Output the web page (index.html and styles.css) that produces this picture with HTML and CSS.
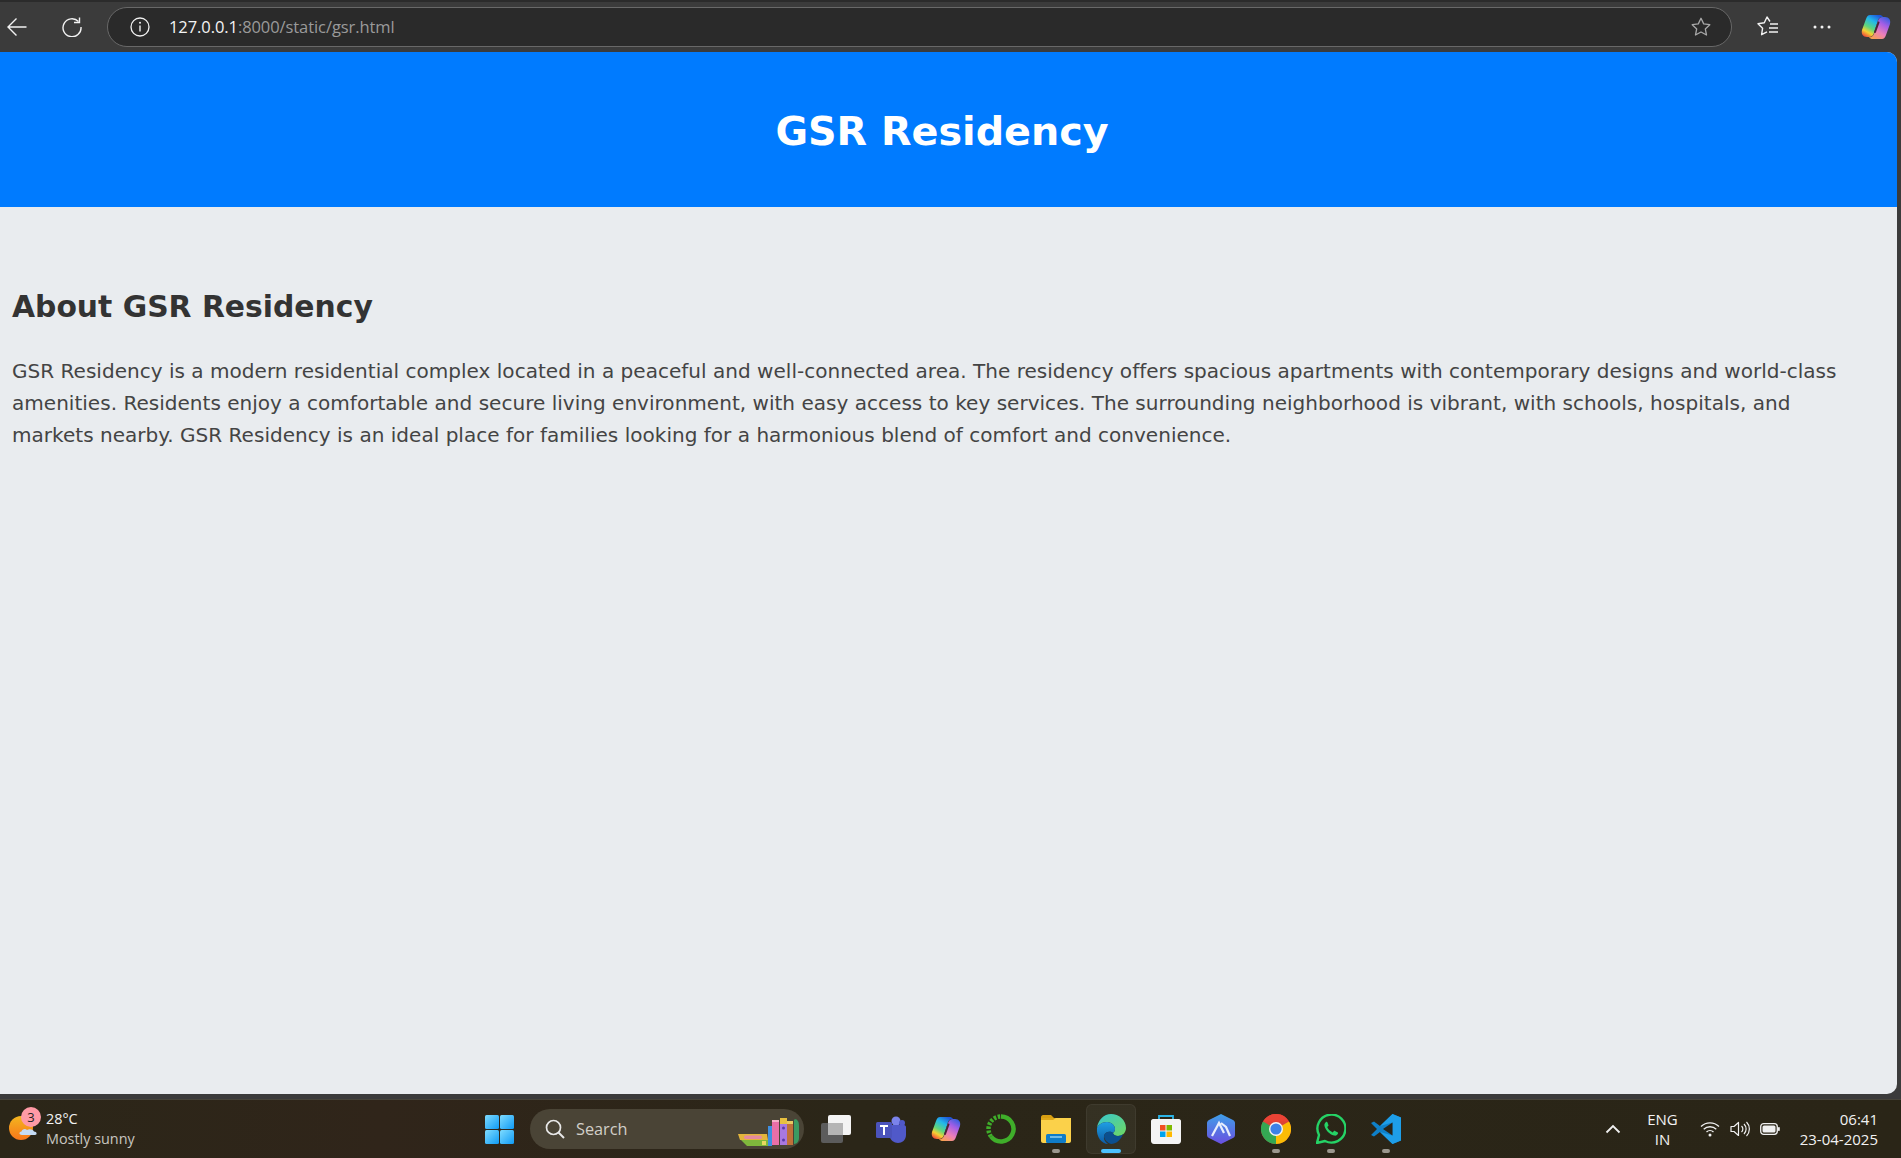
FILE: index.html
```html
<!DOCTYPE html>
<html lang="en">
<head>
<meta charset="utf-8">
<title>GSR Residency</title>
<link rel="stylesheet" href="styles.css">
</head>
<body>
<svg class="defs" width="0" height="0" aria-hidden="true">
  <defs>
    <linearGradient id="cpA" x1=".75" y1="0" x2=".2" y2="1"><stop offset="0" stop-color="#1f55dc"/><stop offset=".3" stop-color="#22b8ea"/><stop offset=".6" stop-color="#5fd67c"/><stop offset=".8" stop-color="#f5d233"/><stop offset="1" stop-color="#f0503a"/></linearGradient>
    <linearGradient id="cpB" x1=".8" y1="0" x2=".2" y2="1"><stop offset="0" stop-color="#3a60e0"/><stop offset=".3" stop-color="#a45ee6"/><stop offset=".65" stop-color="#ec7fb8"/><stop offset="1" stop-color="#f9a24e"/></linearGradient>
    <linearGradient id="edA" x1="0" y1="0" x2="1" y2="1"><stop offset="0" stop-color="#37c6d0"/><stop offset="1" stop-color="#6fd860"/></linearGradient>
    <linearGradient id="edB" x1="0" y1="0" x2="0" y2="1"><stop offset="0" stop-color="#1fa0e4"/><stop offset="1" stop-color="#0c59a4"/></linearGradient>
    <linearGradient id="sun" x1="0" y1="0" x2="0" y2="1"><stop offset="0" stop-color="#f3b61f"/><stop offset="1" stop-color="#f8761a"/></linearGradient>
    <linearGradient id="win" x1="0" y1="0" x2="1" y2="1"><stop offset="0" stop-color="#7fdcff"/><stop offset="1" stop-color="#0f9af5"/></linearGradient>
    <linearGradient id="hex" x1="0" y1="0" x2="0" y2="1"><stop offset="0" stop-color="#3f9fe8"/><stop offset="1" stop-color="#6a4fe0"/></linearGradient>
    <symbol id="copilot" viewBox="0 0 30 26">
      <path d="M9 1h9c2 0 3 .5 4 2-2-.5-4 .5-5 3l-4 13c-.8 2.500-2.500 4-5 4H6C2 23 0 20 1 16L5 5C6 2.500 7 1 9 1z" fill="url(#cpA)"/>
      <path d="M21 25h-9c-2 0-3-.5-4-2 2 .5 4-.5 5-3l4-13c.8-2.500 2.500-4 5-4h2c4 0 6 3 5 7l-4 11c-1 2.500-2 4-4 4z" fill="url(#cpB)"/>
      <path d="M17.500 8.500 14 18" stroke="#4a2436" stroke-width="2" stroke-linecap="round"/>
    </symbol>
  </defs>
</svg>

<header class="chrome">
  <div class="chrome-top"></div>
  <div class="toolbar">
    <button class="nav nav-back" aria-label="Back">
      <svg viewBox="0 0 20 20" class="i20"><path d="M19.500 10H1M9.500 1.500 1 10l8.500 8.500" fill="none" stroke="#f2f2f2" stroke-width="1.400"/></svg>
    </button>
    <button class="nav nav-reload" aria-label="Reload">
      <svg viewBox="0 0 20 20" class="i20"><path d="M16.500 4.500A9 9 0 1 0 19 10" fill="none" stroke="#f2f2f2" stroke-width="1.400"/><path d="M17.500 .5v5h-5.500" fill="none" stroke="#f2f2f2" stroke-width="1.400"/></svg>
    </button>
    <div class="omnibox">
      <svg viewBox="0 0 20 20" class="i20 info"><circle cx="10" cy="10" r="9" fill="none" stroke="#f0f0f0" stroke-width="1.300"/><path d="M10 8.500v6" stroke="#f0f0f0" stroke-width="1.400"/><circle cx="10" cy="5.800" r="1" fill="#f0f0f0"/></svg>
      <span class="url"><span class="host">127.0.0.1</span><span class="rest">:8000/static/gsr.html</span></span>
      <svg viewBox="0 0 20 20" class="i20 star"><path d="m10 1.300 2.700 5.600 6.100.8-4.500 4.200 1.200 6.100L10 15l-5.500 3 1.200-6.100L1.200 7.700l6.100-.8z" fill="none" stroke="#a8a8a8" stroke-width="1.300" stroke-linejoin="round"/></svg>
    </div>
    <div class="tools">
      <svg viewBox="0 0 22 22" class="i22"><path d="M13 5.500 10 1 7.300 6.700 1 7.700l4.600 4.500-1 6.500 5.400-2.800" fill="none" stroke="#f2f2f2" stroke-width="1.400" stroke-linejoin="round"/><path d="M13 8h8M12 12h9M12 16h9" stroke="#f2f2f2" stroke-width="1.400"/></svg>
      <svg viewBox="0 0 22 22" class="i22 dots"><circle cx="4" cy="11" r="1.500" fill="#f2f2f2"/><circle cx="11" cy="11" r="1.500" fill="#f2f2f2"/><circle cx="18" cy="11" r="1.500" fill="#f2f2f2"/></svg>
      <svg class="i-copilot copilot-top"><use href="#copilot"/></svg>
    </div>
  </div>
</header>

<div class="viewport">
  <header class="site-header">
    <h1>GSR Residency</h1>
  </header>
  <main class="content">
    <h2>About GSR Residency</h2>
    <p>GSR Residency is a modern residential complex located in a peaceful and well-connected area. The residency offers spacious apartments with contemporary designs and world-class amenities. Residents enjoy a comfortable and secure living environment, with easy access to key services. The surrounding neighborhood is vibrant, with schools, hospitals, and markets nearby. GSR Residency is an ideal place for families looking for a harmonious blend of comfort and convenience.</p>
  </main>
</div>

<footer class="taskbar">
  <div class="weather">
    <span class="weather-icon">
      <svg viewBox="0 0 30 30" class="i30">
        <circle cx="12" cy="14" r="12" fill="url(#sun)"/>
        <path d="M13 21c-3 0-3.500-3-.5-3.500.5-2.500 4-3.500 5.500-1.500 2.500-1.500 6-.5 7 1.500 3 0 3.500 3.500 1 3.500z" fill="#c5dcf5"/>
      </svg>
      <span class="badge">3</span>
    </span>
    <span class="weather-text"><span class="temp">28°C</span><span class="cond">Mostly sunny</span></span>
  </div>

  <div class="center">
    <span class="tb start">
      <svg viewBox="0 0 29 29" class="i29"><rect width="14" height="14" rx="1.500" fill="url(#win)"/><rect x="15" width="14" height="14" rx="1.500" fill="url(#win)"/><rect y="15" width="14" height="14" rx="1.500" fill="url(#win)"/><rect x="15" y="15" width="14" height="14" rx="1.500" fill="url(#win)"/></svg>
    </span>
    <div class="search">
      <svg viewBox="0 0 20 20" class="i20"><circle cx="8.500" cy="8.500" r="7" fill="none" stroke="#e8e8e8" stroke-width="1.700"/><path d="m13.500 13.500 5.500 5.500" stroke="#e8e8e8" stroke-width="1.900"/></svg>
      <span class="search-label">Search</span>
      <svg viewBox="0 0 62 28" class="books">
        <path d="M0 16h29l1 6H2z" fill="#e3b53c"/><rect x="6" y="17.500" width="18" height="3.500" rx="1.700" fill="#e58aa0"/>
        <path d="M3 22h27v6H9z" fill="#7fb83c"/><rect x="24" y="23" width="4" height="4" fill="#e8d860"/>
        <rect x="30" y="8" width="4" height="20" fill="#3f8fe0"/>
        <rect x="34" y="2" width="7" height="25" fill="#e86fa8"/><rect x="34" y="2" width="7" height="2" fill="#f4b0c8"/>
        <rect x="42" y="0" width="7" height="27" fill="#a878e0"/><rect x="42" y="0" width="7" height="6" fill="#e8c040"/><circle cx="45.500" cy="10" r="1.500" fill="#5a3aa8"/><circle cx="45.500" cy="22" r="1.500" fill="#5a3aa8"/>
        <rect x="49" y="3" width="6" height="24" fill="#c0703a"/><rect x="49" y="3" width="6" height="3" fill="#e8c860"/>
        <path d="M56 2c0-1 3-1 3 0 1.500 1 2 3 2 6v12c0 3-2 6-5 6z" fill="#3c9a62"/>
      </svg>
    </div>
    <span class="tb">
      <svg viewBox="0 0 30 28" class="i30"><rect y="8" width="22" height="20" rx="2" fill="#5c5c5c"/><rect x="7" width="23" height="20" rx="2" fill="#f4f4f4"/><rect x="7" y="8" width="15" height="12" fill="#b5b5b5"/></svg>
    </span>
    <span class="tb">
      <svg viewBox="0 0 30 28" class="i30"><circle cx="20" cy="6" r="4.500" fill="#7b83eb"/><path d="M13 10h15c1 0 2 1 2 2v8c0 5-4 8-8 8s-8-3-9-8z" fill="#5059c9"/><circle cx="26" cy="8" r="3" fill="#5059c9"/><rect y="7" width="16" height="16" rx="1.500" fill="#4b53bc"/><path d="M4 11h8M8 11v9" stroke="#fff" stroke-width="2" fill="none"/></svg>
    </span>
    <span class="tb"><svg class="i-copilot"><use href="#copilot"/></svg></span>
    <span class="tb">
      <svg viewBox="0 0 30 30" class="i30"><path d="M15 2.500A12.500 12.500 0 1 1 5 22.500" fill="none" stroke="#3fae2a" stroke-width="4.500"/><path d="M5 22.500A12.500 12.500 0 0 1 15 2.500" fill="none" stroke="#3fae2a" stroke-width="4.500" stroke-dasharray="2.500 1.500"/></svg>
    </span>
    <span class="tb">
      <svg viewBox="0 0 30 28" class="i30"><path d="M0 2c0-1 1-2 2-2h8l3 3h-13z" fill="#d89f12"/><path d="M0 3h30v23c0 1-1 2-2 2H2c-1 0-2-1-2-2z" fill="#fbd14a"/><path d="M0 5h12l3-2H0z" fill="#e0a818"/><rect x="5" y="19" width="20" height="9" rx="1.500" fill="#0f7cc8"/><path d="M9 22h12" stroke="#8fd0f5" stroke-width="1.500"/></svg>
      <i class="dot"></i>
    </span>
    <span class="tb tb-active">
      <svg viewBox="0 0 30 30" class="i30"><path d="M1 14C2 6 8 0 15 0c8 0 15 6 15 14 0 5-4 8-8 8-3 0-5-2-5-3 1-1 2-2 2-4 0-4-4-7-8-7-5 0-9 3-10 6z" fill="url(#edA)"/><path d="M1 14c1-3 5-6 10-6 4 0 8 3 8 7 0 2-1 3-2 4-2-2-8-2-9 3-.7 3 1 6 4 8C6 30 0 23 1 14z" fill="url(#edB)"/><path d="M17 19c0 1 2 3 5 3 2 0 4-1 5-2-2 6-7 10-12 10-3-1-7-4-7-8 1-5 7-5 9-3z" fill="#0b4f8f"/></svg>
      <i class="dot dot-active"></i>
    </span>
    <span class="tb">
      <svg viewBox="0 0 30 30" class="i30"><path d="M8 6V2h14v4" fill="none" stroke="#2cb5e8" stroke-width="1.800"/><path d="M2 5h26c1 0 2 1 2 2v20c0 1.500-1 3-3 3H3c-2 0-3-1.500-3-3V7c0-1 1-2 2-2z" fill="#f4f4f4"/><rect x="9" y="11" width="5.500" height="5.500" fill="#f25022"/><rect x="15.500" y="11" width="5.500" height="5.500" fill="#7fba00"/><rect x="9" y="17.500" width="5.500" height="5.500" fill="#00a4ef"/><rect x="15.500" y="17.500" width="5.500" height="5.500" fill="#ffb900"/></svg>
    </span>
    <span class="tb">
      <svg viewBox="0 0 28 30" class="i30"><path d="M14 0l12 6c1 .5 2 1.500 2 3v12c0 1.500-1 2.500-2 3l-12 6-12-6c-1-.5-2-1.500-2-3V9c0-1.500 1-2.500 2-3z" fill="url(#hex)"/><path d="M5 22 12 9l5 10M14 9l5 4 4 9" fill="none" stroke="#e8eefc" stroke-width="2.200"/></svg>
    </span>
    <span class="tb">
      <svg viewBox="0 0 30 30" class="i30"><circle cx="15" cy="15" r="15" fill="#dc4437"/><path d="M15 15 28 7.500A15 15 0 0 1 15 30z" fill="#fbbc05"/><path d="M15 15 15 30A15 15 0 0 1 2 7.500z" fill="#34a853"/><path d="M2 7.500A15 15 0 0 1 28 7.500H15z" fill="#ea4335"/><circle cx="15" cy="15" r="7" fill="#f4f4f4"/><circle cx="15" cy="15" r="5.600" fill="#3b82e8"/></svg>
      <i class="dot"></i>
    </span>
    <span class="tb">
      <svg viewBox="0 0 30 30" class="i30"><path d="M1 29 3 21A14 14 0 1 1 9 27z" fill="none" stroke="#25d366" stroke-width="2.400" stroke-linejoin="round"/><path d="M10 8c-1 1-2 2-1.500 4 1 4 5 8.500 9.500 9.500 2 .5 3.500-.5 4-2 .2-.8 0-1-.5-1.300l-2.500-1.200c-.6-.3-1-.2-1.300.2l-1 1.200c-2.500-1-4.500-3-5.500-5.300l1-1c.3-.4.4-.7.200-1.200L11.500 8.500C11.200 7.800 10.500 7.600 10 8z" fill="#25d366"/></svg>
      <i class="dot"></i>
    </span>
    <span class="tb">
      <svg viewBox="0 0 30 30" class="i30"><path d="M21.500 0 30 3.500v23L21.500 30 9 18l-6 4.500L0 21l6-6-6-6 3-1.500L9 12z" fill="#0f80c8"/><path d="M21.500 0 30 3.500v23L21.500 30 9 18l12.500 3.500V8.500L9 12z" fill="#1e9ee8"/><path d="M21.500 8.500v13L12 15z" fill="#2a2518"/></svg>
      <i class="dot"></i>
    </span>
  </div>

  <div class="tray">
    <svg viewBox="0 0 16 10" class="caret"><path d="M1.500 8.500 8 2l6.500 6.500" fill="none" stroke="#f0f0f0" stroke-width="1.800"/></svg>
    <span class="lang"><span>ENG</span><span>IN</span></span>
    <span class="status">
      <svg viewBox="0 0 20 16" class="i-status"><path d="M1 5.500a13 13 0 0 1 18 0M3.700 8.300a9 9 0 0 1 12.600 0M6.500 11a5 5 0 0 1 7 0" fill="none" stroke="#f0f0f0" stroke-width="1.300"/><circle cx="10" cy="14" r="1.500" fill="#f0f0f0"/></svg>
      <svg viewBox="0 0 20 16" class="i-status"><path d="M1 5.500h3L8.500 1.500v13L4 10.500H1z" fill="none" stroke="#f0f0f0" stroke-width="1.200" stroke-linejoin="round"/><path d="M11.500 5a4 4 0 0 1 0 6M14 3a7 7 0 0 1 0 10M16.500 1a10 10 0 0 1 0 14" fill="none" stroke="#f0f0f0" stroke-width="1.200"/></svg>
      <svg viewBox="0 0 20 14" class="i-status"><rect x=".7" y="1.700" width="16.600" height="10.600" rx="3" fill="none" stroke="#f0f0f0" stroke-width="1.300"/><rect x="2.500" y="3.500" width="13" height="7" rx="1.500" fill="#f0f0f0"/><rect x="18" y="5" width="1.800" height="4" rx=".8" fill="#f0f0f0"/></svg>
    </span>
    <span class="clock"><span>06:41</span><span>23-04-2025</span></span>
  </div>
</footer>
</body>
</html>
```
FILE: styles.css
```css
* { box-sizing: border-box; }
html, body { margin: 0; height: 100%; }
body {
  display: flex;
  flex-direction: column;
  height: 100vh;
  overflow: hidden;
  background: #3b3b3b;
  font-family: "DejaVu Sans", Verdana, sans-serif;
}
.defs { position: absolute; }
svg { display: block; flex: none; }
.i20 { width: 20px; height: 20px; }
.i22 { width: 22px; height: 22px; }
.i29 { width: 29px; height: 29px; }
.i30 { width: 30px; height: 30px; }
.i-copilot { width: 30px; height: 26px; }

/* Browser chrome */
.chrome { height: 52px; flex: none; background: #3b3b3b; }
.chrome-top { height: 2px; background: #2b2b2b; }
.toolbar { display: flex; align-items: center; height: 46px; padding: 3px 0 0 0; }
.nav { width: 20px; height: 20px; padding: 0; border: 0; background: none; flex: none; }
.nav-back { margin-left: 7px; }
.nav-reload { margin-left: 35px; }
.omnibox {
  display: flex;
  align-items: center;
  width: 1625px;
  height: 40px;
  margin-left: 25px;
  padding: 0 20px 0 22px;
  background: #2a2a2a;
  border: 1px solid #686868;
  border-radius: 20px;
  font-family: "Open Sans", "Noto Sans", sans-serif;
}
.url { margin-left: 19px; font-size: 16.500px; letter-spacing: -.08px; flex: 1; }
.host { color: #f4f4f4; }
.rest { color: #9a9a9a; }
.tools { display: flex; align-items: center; margin-left: 25px; gap: 32px; }
.copilot-top { margin-left: -4px; }

/* Page */
.viewport {
  flex: none;
  height: 1042px;
  width: 1897px;
  background: #e9ecef;
  border-radius: 0 10px 10px 0;
  overflow: hidden;
}
.site-header {
  height: 155px;
  padding: 2px 13px 0 0;
  display: flex;
  align-items: center;
  justify-content: center;
  background: #007bff;
  color: #fff;
}
.site-header h1 { margin: 0; font-size: 39.700px; font-weight: 700; }
.content { padding: 78px 30px 0 12px; color: #444; }
.content h2 { margin: 0 0 26px; font-size: 29.800px; line-height: 44px; font-weight: 700; color: #333; }
.content p { margin: 0; font-size: 20.050px; letter-spacing: .01px; line-height: 32px; }

/* Taskbar */
.taskbar {
  flex: none;
  display: flex;
  align-items: center;
  margin-top: 5px;
  height: 59px;
  background: linear-gradient(90deg, #2b2618, #30251a 20%, #2b2618 45%, #2a2517 100%);
  border-top: 1px solid #47443a;
  font-family: "Open Sans", "Noto Sans", sans-serif;
  color: #f2f2f2;
}
.weather { display: flex; align-items: center; width: 470px; padding-left: 9px; gap: 7px; font-size: 14.400px; }
.weather-icon { position: relative; width: 30px; height: 30px; }
.badge {
  position: absolute;
  left: 12px;
  top: -7px;
  width: 20px;
  height: 20px;
  border-radius: 50%;
  background: #ff9aa6;
  color: #222;
  font-size: 13px;
  line-height: 20px;
  text-align: center;
}
.weather-text { display: flex; flex-direction: column; line-height: 20px; }
.cond { color: #c9c6c0; }
.center { display: flex; align-items: center; }
.tb {
  position: relative;
  width: 55px;
  height: 50px;
  display: flex;
  align-items: center;
  justify-content: center;
}
.tb-active::before {
  content: "";
  position: absolute;
  top: 0;
  bottom: 0;
  left: 2.500px;
  right: 2.500px;
  background: rgba(255,255,255,.05);
  border: 1px solid rgba(255,255,255,.05);
  border-radius: 6px;
}
.tb-active svg { position: relative; }
.dot {
  position: absolute;
  left: 50%;
  bottom: 1px;
  width: 8px;
  height: 4px;
  margin-left: -4px;
  border-radius: 2px;
  background: #9b978e;
}
.dot-active { width: 20px; margin-left: -10px; background: #4cc2ff; }
.start { width: 58px; margin-right: 2px; }
.search {
  display: flex;
  align-items: center;
  position: relative;
  width: 274px;
  height: 40px;
  padding-left: 15px;
  margin-right: 4px;
  background: #4a4436;
  border-radius: 20px;
}
.search-label { margin-left: 11px; font-size: 16.300px; color: #d2cfc8; }
.books { position: absolute; left: 208px; top: 9px; width: 62px; height: 28px; }
.tray { display: flex; align-items: center; margin-left: auto; padding-right: 23px; font-size: 15px; }
.caret { width: 16px; height: 10px; margin-right: 26px; }
.lang { display: flex; flex-direction: column; align-items: center; line-height: 20px; margin-right: 22px; }
.status { display: flex; align-items: center; gap: 10px; margin-right: 20px; }
.i-status { width: 20px; height: 16px; }
.clock { display: flex; flex-direction: column; align-items: flex-end; line-height: 20px; }
```
